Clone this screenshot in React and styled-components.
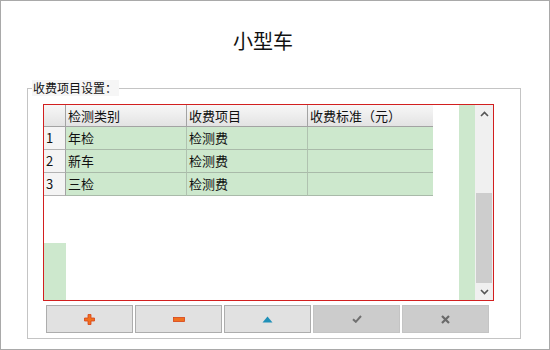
import React from "react";
import styled, { createGlobalStyle } from "styled-components";

const Global = createGlobalStyle`
  html, body { margin: 0; padding: 0; background: #fff; }
  body { font-family: "Noto Sans CJK SC", "Noto Sans", sans-serif; color: #111; }
  * { box-sizing: border-box; }
`;

const Window = styled.div`
  width: 550px;
  height: 350px;
  border: 1px solid #a9a9a9;
  background: #fff;
  display: flex;
  flex-direction: column;
`;

const Title = styled.div`
  margin-top: 26px;
  padding-right: 24px;
  height: 28px;
  line-height: 28px;
  font-size: 20px;
  text-align: center;
  color: #111;
`;

const Group = styled.fieldset`
  margin: 25px 0 0 26px;
  width: 494px;
  padding: 0 0 5px 0;
  border: 1px solid #c4c4c4;
  min-width: 0;
`;

const Legend = styled.legend`
  margin-left: 4px;
  padding: 0 2px 0 1px;
  font-size: 12px;
  line-height: 16px;
  background: #f6f6f6;
`;

const Table = styled.div`
  margin: 8px 0 0 15px;
  width: 451px;
  height: 197px;
  border: 1px solid #d21f1f;
  display: flex;
`;

const GridArea = styled.div`
  width: 415px;
  display: flex;
  flex-direction: column;
`;

const Grid = styled.div`
  display: grid;
  grid-template-columns: 22px 121px 121px 125px;
  grid-auto-rows: 23px;
  grid-template-rows: 22px;
`;

const HeadCell = styled.div`
  background: linear-gradient(#f7f7f7, #e3e3e3);
  border-right: ${(p) => (p.$last ? "none" : "1px solid #a3a3a3")};
  border-bottom: 1px solid #a3a3a3;
  font-size: 13px;
  line-height: 21px;
  padding-left: 2px;
  white-space: nowrap;
  overflow: hidden;
`;

const RowHead = styled.div`
  background: #f4f4f4;
  border-right: 1px solid #a3a3a3;
  border-bottom: 1px solid #b3b3b3;
  font-size: 13px;
  line-height: 22px;
  padding-left: 2px;
`;

const Cell = styled.div`
  background: #cde8cd;
  border-right: ${(p) => (p.$last ? "none" : "1px solid #b0c2b0")};
  border-bottom: 1px solid #a9baa9;
  font-size: 13px;
  line-height: 22px;
  padding-left: 2px;
  white-space: nowrap;
`;

const Empty = styled.div`
  flex: 1;
  display: flex;
  flex-direction: column;
  justify-content: flex-end;
`;

const LeftStripe = styled.div`
  width: 22px;
  height: 57px;
  background: #cde8cd;
`;

const GreenStripe = styled.div`
  width: 16px;
  background: #cde8cd;
`;

const Scrollbar = styled.div`
  width: 18px;
  background: #f0f0f0;
  display: flex;
  flex-direction: column;
`;

const ArrowBox = styled.div`
  height: 17px;
  display: flex;
  align-items: center;
  justify-content: center;
`;

const Track = styled.div`
  flex: 1;
  padding: 71px 1px 0 1px;
  display: flex;
`;

const Thumb = styled.div`
  flex: 1;
  background: #cdcdcd;
`;

const Buttons = styled.div`
  margin: 4px 0 0 18px;
  display: flex;
  gap: 2px;
`;

const Btn = styled.button`
  width: 87px;
  height: 28px;
  padding: 0;
  margin: 0;
  border: 1px solid ${(p) => (p.disabled ? "#c4c4c4" : "#adadad")};
  background: ${(p) => (p.disabled ? "#cccccc" : "#e1e1e1")};
  display: flex;
  align-items: center;
  justify-content: center;
`;

const Chevron = ({ up }) => (
  <svg width="9" height="6" viewBox="0 0 9 6">
    <path
      d={up ? "M1 5 L4.5 1.5 L8 5" : "M1 1 L4.5 4.5 L8 1"}
      fill="none"
      stroke="#555"
      strokeWidth="1.6"
    />
  </svg>
);

const PlusIcon = () => (
  <svg width="11" height="11" viewBox="0 0 11 11">
    <path d="M4 0.5h3v3.5h3.5v3H7v3.5H4V7H0.5V4H4z" fill="#f07020" stroke="#d84315" strokeWidth="0.8" />
  </svg>
);

const MinusIcon = () => (
  <svg width="12" height="5" viewBox="0 0 12 5">
    <rect x="0.5" y="0.5" width="11" height="4" fill="#f07020" stroke="#d84315" strokeWidth="0.8" />
  </svg>
);

const UpIcon = () => (
  <svg width="11" height="7" viewBox="0 0 11 7">
    <path d="M5.5 0.5 L10.5 6.5 H0.5 Z" fill="#2090b8" />
  </svg>
);

const CheckIcon = () => (
  <svg width="10" height="8" viewBox="0 0 10 8">
    <path d="M1 4.2 L3.8 6.8 L9 1" fill="none" stroke="#707070" strokeWidth="2" />
  </svg>
);

const CrossIcon = () => (
  <svg width="9" height="9" viewBox="0 0 9 9">
    <path d="M1 1 L8 8 M8 1 L1 8" fill="none" stroke="#6a6a6a" strokeWidth="2.2" />
  </svg>
);

const rows = [
  ["1", "年检", "检测费", ""],
  ["2", "新车", "检测费", ""],
  ["3", "三检", "检测费", ""],
];

export default function App() {
  return (
    <>
      <Global />
      <Window>
        <Title>小型车</Title>
        <Group>
          <Legend>收费项目设置：</Legend>
          <Table>
            <GridArea>
              <Grid>
                <HeadCell />
                <HeadCell>检测类别</HeadCell>
                <HeadCell>收费项目</HeadCell>
                <HeadCell $last>收费标准（元）</HeadCell>
                {rows.map((r) => (
                  <React.Fragment key={r[0]}>
                    <RowHead>{r[0]}</RowHead>
                    <Cell>{r[1]}</Cell>
                    <Cell>{r[2]}</Cell>
                    <Cell $last>{r[3]}</Cell>
                  </React.Fragment>
                ))}
              </Grid>
              <Empty>
                <LeftStripe />
              </Empty>
            </GridArea>
            <GreenStripe />
            <Scrollbar>
              <ArrowBox>
                <Chevron up />
              </ArrowBox>
              <Track>
                <Thumb />
              </Track>
              <ArrowBox>
                <Chevron />
              </ArrowBox>
            </Scrollbar>
          </Table>
          <Buttons>
            <Btn><PlusIcon /></Btn>
            <Btn><MinusIcon /></Btn>
            <Btn><UpIcon /></Btn>
            <Btn disabled><CheckIcon /></Btn>
            <Btn disabled><CrossIcon /></Btn>
          </Buttons>
        </Group>
      </Window>
    </>
  );
}
